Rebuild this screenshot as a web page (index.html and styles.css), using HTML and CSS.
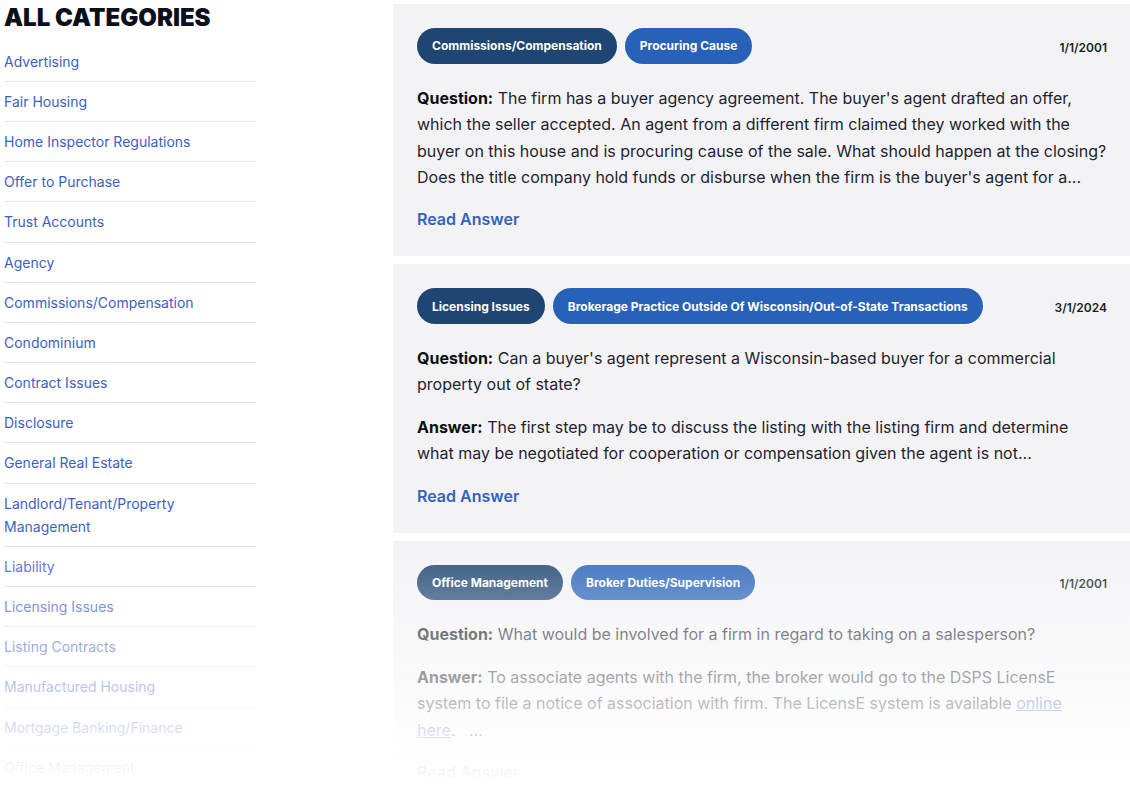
FILE: index.html
```html
<!DOCTYPE html>
<html lang="en">
<head>
<meta charset="utf-8">
<title>All Categories</title>
<link rel="stylesheet" href="styles.css">
</head>
<body>
<div class="page">
  <aside class="sidebar">
    <h2 class="sidebar-title">ALL CATEGORIES</h2>
    <ul class="cat-list">
      <li><a href="#">Advertising</a></li>
      <li><a href="#">Fair Housing</a></li>
      <li><a href="#">Home Inspector Regulations</a></li>
      <li><a href="#">Offer to Purchase</a></li>
      <li><a href="#">Trust Accounts</a></li>
      <li><a href="#">Agency</a></li>
      <li><a href="#">Commissions/Compensation</a></li>
      <li><a href="#">Condominium</a></li>
      <li><a href="#">Contract Issues</a></li>
      <li><a href="#">Disclosure</a></li>
      <li><a href="#">General Real Estate</a></li>
      <li><a href="#">Landlord/Tenant/Property Management</a></li>
      <li><a href="#">Liability</a></li>
      <li><a href="#">Licensing Issues</a></li>
      <li><a href="#">Listing Contracts</a></li>
      <li><a href="#">Manufactured Housing</a></li>
      <li><a href="#">Mortgage Banking/Finance</a></li>
      <li><a href="#">Office Management</a></li>
    </ul>
  </aside>
  <main class="results">
    <article class="card">
      <div class="card-head">
        <div class="tags">
          <span class="tag tag-dark">Commissions/Compensation</span>
          <span class="tag tag-blue">Procuring Cause</span>
        </div>
        <span class="date">1/1/2001</span>
      </div>
      <p class="qa"><strong>Question:</strong> The firm has a buyer agency agreement. The buyer's agent drafted an offer, which the seller accepted. An agent from a different firm claimed they worked with the buyer on this house and is procuring cause of the sale. What should happen at the closing? Does the title company hold funds or disburse when the firm is the buyer's agent for a...</p>
      <a class="read" href="#">Read Answer</a>
    </article>
    <article class="card">
      <div class="card-head">
        <div class="tags">
          <span class="tag tag-dark">Licensing Issues</span>
          <span class="tag tag-blue">Brokerage Practice Outside Of Wisconsin/Out-of-State Transactions</span>
        </div>
        <span class="date">3/1/2024</span>
      </div>
      <p class="qa"><strong>Question:</strong> Can a buyer's agent represent a Wisconsin-based buyer for a commercial property out of state?</p>
      <p class="qa"><strong>Answer:</strong> The first step may be to discuss the listing with the listing firm and determine what may be negotiated for cooperation or compensation given the agent is not...</p>
      <a class="read" href="#">Read Answer</a>
    </article>
    <article class="card">
      <div class="card-head">
        <div class="tags">
          <span class="tag tag-dark">Office Management</span>
          <span class="tag tag-blue">Broker Duties/Supervision</span>
        </div>
        <span class="date">1/1/2001</span>
      </div>
      <p class="qa"><strong>Question:</strong> What would be involved for a firm in regard to taking on a salesperson?</p>
      <p class="qa"><strong>Answer:</strong> To associate agents with the firm, the broker would go to the DSPS LicensE system to file a notice of association with firm. The LicensE system is available <a class="inline-link" href="#">online here</a>.&nbsp;&nbsp; ...</p>
      <a class="read" href="#">Read Answer</a>
    </article>
  </main>
</div>
<div class="fade"></div>
</body>
</html>
```
FILE: styles.css
```css
* {
  box-sizing: border-box;
}

html, body {
  margin: 0;
  padding: 0;
  background: #ffffff;
}

body {
  font-family: Inter, "Noto Sans", Arial, sans-serif;
  color: #1f2330;
  overflow: hidden;
  height: 785px;
}

.page {
  display: grid;
  grid-template-columns: 252px 1fr;
  column-gap: 137px;
  padding: 4px 0 0 4px;
  align-items: start;
}

.sidebar-title {
  margin: 0 0 9.6px;
  font-size: 24px;
  line-height: 28px;
  font-weight: 900;
  color: #0b0f1c;
  letter-spacing: 0;
}

.cat-list {
  list-style: none;
  margin: 0;
  padding: 0;
}

.cat-list li {
  padding: 8px 0 8.2px;
  border-bottom: 1px solid #e2e3e8;
  font-size: 14px;
  line-height: 23px;
}

.cat-list a {
  color: #3d5ec4;
  text-decoration: none;
}

.results {
  display: flex;
  flex-direction: column;
  gap: 8px;
}

.card {
  background: #f3f3f6;
  padding: 24px 23px 24px 24px;
}

.card-head {
  display: flex;
  align-items: center;
  justify-content: space-between;
  margin-bottom: 21.2px;
}

.tags {
  display: flex;
  gap: 8px;
}

.tag {
  display: inline-flex;
  align-items: center;
  height: 35.5px;
  padding: 0 15px;
  border-radius: 999px;
  color: #ffffff;
  font-size: 12px;
  font-weight: 700;
}

.tag-dark {
  background: #1f4673;
}

.tag-blue {
  background: #2862b8;
}

.date {
  font-size: 12px;
  font-weight: 600;
  color: #1c1f26;
  padding-top: 3px;
}

.qa {
  margin: 0 0 16px;
  font-size: 16px;
  line-height: 26.4px;
}

.qa strong {
  font-weight: 700;
  color: #0d0f14;
}

.inline-link {
  color: #3d5ec4;
  text-decoration: underline;
}

.read {
  display: block;
  font-size: 16px;
  line-height: 26px;
  font-weight: 600;
  color: #3462bd;
  text-decoration: none;
}

.fade {
  position: fixed;
  left: 0;
  right: 0;
  bottom: 0;
  height: 265px;
  background: linear-gradient(to bottom, rgba(255, 255, 255, 0), #ffffff);
  pointer-events: none;
}
```
